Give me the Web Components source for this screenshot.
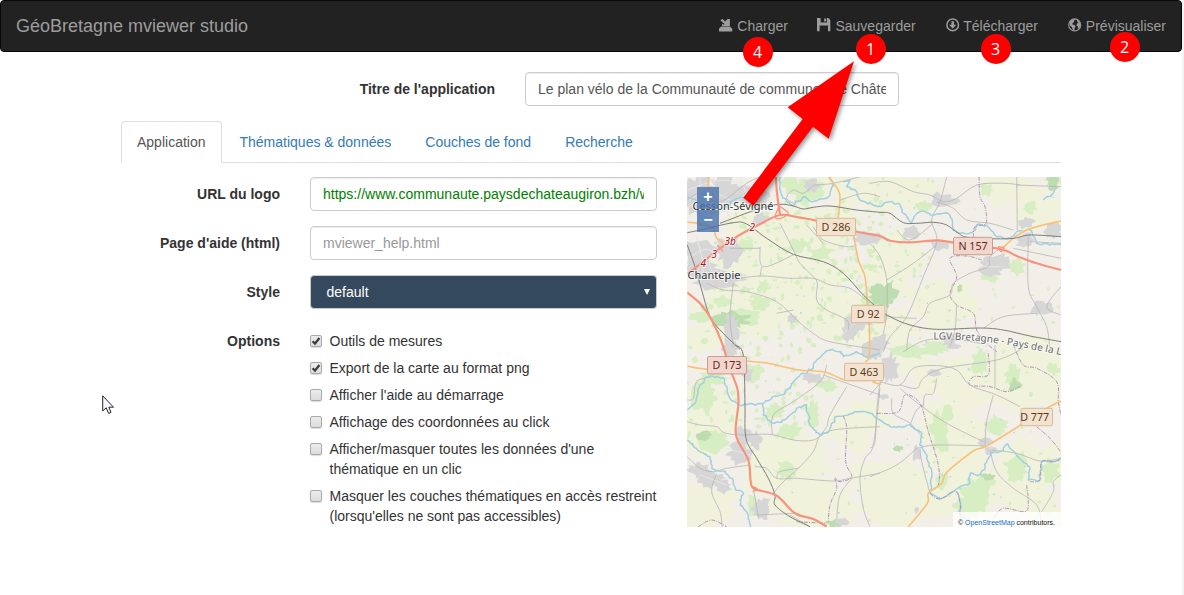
<!DOCTYPE html>
<html lang="fr">
<head>
<meta charset="utf-8">
<title>GéoBretagne mviewer studio</title>
<style>
html{background:#f4f4f4}
body{margin:0;width:1182px;height:595px;background:#fff;overflow:hidden;font:14px/20px "Liberation Sans",Arial,sans-serif;color:#333}
</style>
</head>
<body>
<studio-app></studio-app>
<script>
const define = (name, html, after) => {
  const t = document.createElement('template');
  t.innerHTML = html;
  customElements.define(name, class extends HTMLElement {
    connectedCallback() {
      if (this.shadowRoot) return;
      this.attachShadow({mode: 'open'}).append(t.content.cloneNode(true));
      if (after) after(this, this.shadowRoot);
    }
  });
};

const ICONS = {
  open: '<path d="M0 13.6V10.4L2.4 8.6H10.8L13.2 10.4V13.6Z"/><path d="M1.4 2.6L3.4 .8L6 3.4L8.6 .9H10.9V8H3.4L5.6 5.9Z"/><path d="M3 5.5V8H4.600L4.800 6.700Z"/>',
  save: '<path fill-rule="evenodd" d="M0 0H3.6V4.6H10V0H11.3L13.3 2V13.3H11V7.6H2.6V13.3H0ZM7.2 .4H9.2V3.6H7.2Z"/>',
  download: '<circle cx="6.7" cy="6.9" r="5.8" fill="none" stroke="currentColor" stroke-width="1.5"/><path d="M5.4 3.2H8V6.7H10.3L6.7 10.8L3.1 6.7H5.4Z"/>',
  globe: '<circle cx="6.7" cy="6.9" r="6" fill="none" stroke="currentColor" stroke-width="1.1"/><path d="M1.2 4.5L3.2 1.8L6.3 1L7.2 2L5.8 2.8L6.2 4L4.6 5L4.4 6.4L6.6 7L7.6 8.6L6.6 10.2L6.3 12.6L4.6 11.6L4 9.2L2 7.6ZM8.6 1.4L11.6 3.6L12.6 7L11.4 10L10 10.8L9.8 8.4L8.4 7.2L9 5.4L10.6 4.8L9.2 3.6Z"/>'
};
define('nav-action', `<style>
:host{display:block;padding:15px;color:#9d9d9d;white-space:nowrap}
svg{width:14px;height:14px;display:inline-block;vertical-align:-1px;fill:currentColor;overflow:visible}
:host([icon=save]) svg{margin:0 .3px 0 -.7px}
</style><svg viewBox="0 0 14 14"></svg> <slot></slot>`, (el, r) => {
  r.querySelector('svg').innerHTML = ICONS[el.getAttribute('icon')];
});

define('top-bar', `<style>
:host{display:flex;justify-content:space-between;box-sizing:border-box;height:52px;border:1px solid #080808;border-radius:4px;background:#222;margin-bottom:20px}
.brand{padding:15px;font-size:18px;color:#9d9d9d}
nav{display:flex}
</style><div class="brand"><slot name="brand"></slot></div><nav><slot></slot></nav>`);

define('form-row', `<style>
:host{display:grid;grid-template-columns:var(--cols,189px 377px);margin-bottom:15px}
.l{padding:7px 15px 0;text-align:right;font-weight:700}
.f{padding:0 15px;min-width:0}
</style><div class="l"><slot name="label"></slot></div><div class="f"><slot></slot></div>`);

define('text-field', `<style>
:host{display:block;box-sizing:border-box;height:34px;border:1px solid #ccc;border-radius:4px;padding:6px 12px;color:#555;box-shadow:inset 0 1px 1px rgba(0,0,0,.075);background:#fff}
div{overflow:hidden;white-space:nowrap}
</style><div><slot></slot></div>`);

define('select-field', `<style>
:host{display:flex;justify-content:space-between;align-items:center;box-sizing:border-box;height:34px;border:1px solid #ccc;border-radius:4px;padding:0 6px 0 15.500px;background:#34495e;color:#fff}
i{border:3.5px solid transparent;border-top:6px solid #fff;border-bottom:0}
</style><slot></slot><i></i>`);

define('check-option', `<style>
:host{display:flex;padding-top:7px}
i{box-sizing:border-box;flex:none;width:12px;height:12px;margin:4px 7.5px 0 0;border:1px solid #a9a9a9;border-radius:2px;background:linear-gradient(#ececec,#dcdcdc);box-shadow:0 1px 1px #ddd}
svg{display:none;width:10px;height:10px}
:host([checked]) svg{display:block}
</style><i><svg viewBox="0 0 10 10"><path d="M1.6 5.2L4 7.6L8.4 2" fill="none" stroke="#3a3a3a" stroke-width="2.2"/></svg></i><div><slot></slot></div>`);

define('tab-item', `<style>
:host{display:block;padding:10px 15px;border:1px solid transparent;border-radius:4px 4px 0 0;margin:0 2px -1px 0;color:#337ab7}
:host([active]){color:#555;background:#fff;border-color:#ddd;border-bottom-color:#fff}
</style><slot></slot>`);
define('tab-strip', `<style>:host{display:flex;margin:0 15px 14px;border-bottom:1px solid #ddd}</style><slot></slot>`);

/* Map geometry: point lists on four sheets, three units to a pixel. */
const SHEETS = {A: [-7, -7], B: [183, -7], C: [-7, 168], D: [183, 168]};
const pts = s => {
  let o = SHEETS.A; const out = [];
  for (const k of s.trim().split(/\s+/)) {
    if (SHEETS[k]) { o = SHEETS[k]; continue; }
    const [x, y] = k.split(',').map(Number);
    out.push([o[0] + x / 3, o[1] + y / 3]);
  }
  return out;
};
const n = v => v.toFixed(1);
let seed = 7;
const rnd = () => (seed = (seed * 16807) % 2147483647) / 2147483647;
const line = s => {
  const p = pts(s); let d = 'M' + n(p[0][0]) + ' ' + n(p[0][1]);
  for (let i = 0; i < p.length - 1; i++) {
    const a = p[i - 1] || p[i], b = p[i], c = p[i + 1], e = p[i + 2] || c;
    d += `C${n(b[0] + (c[0] - a[0]) / 6)} ${n(b[1] + (c[1] - a[1]) / 6)} ${n(c[0] - (e[0] - b[0]) / 6)} ${n(c[1] - (e[1] - b[1]) / 6)} ${n(c[0])} ${n(c[1])}`;
  }
  return d;
};
const wavy = s => {
  const p = pts(s); let d = 'M' + n(p[0][0]) + ' ' + n(p[0][1]);
  for (let i = 1; i < p.length; i++) {
    const a = p[i - 1], b = p[i], L = Math.hypot(b[0] - a[0], b[1] - a[1]), m = Math.max(1, Math.round(L / 4));
    for (let j = 1; j <= m; j++) {
      const t = j / m, w = (rnd() - .5) * (j < m ? 3 : 0), u = (j - .5) / m, v = (rnd() - .5) * 3;
      d += `Q${n(a[0] + (b[0] - a[0]) * u + v)} ${n(a[1] + (b[1] - a[1]) * u - v)} ${n(a[0] + (b[0] - a[0]) * t + w)} ${n(a[1] + (b[1] - a[1]) * t + w)}`;
    }
  }
  return d;
};
/* Irregular parcel outline; larger parcels get more corners. */
const blob = (x, y, rx, ry) => {
  const k = Math.round(6 + Math.min(16, (rx + ry) * .7) + rnd() * 3), out = [];
  for (let i = 0; i < k; i++) {
    const a = i / k * 6.283, r = .6 + rnd() * .62;
    out.push(n(x + Math.cos(a) * rx * r) + ' ' + n(y + Math.sin(a) * ry * r));
  }
  return 'M' + out.join('L') + 'Z';
};
const blobs = s => { let o = SHEETS.A, d = '';
  for (const k of s.trim().split(/\s+/)) {
    if (SHEETS[k]) { o = SHEETS[k]; continue; }
    const [x, y, a, b] = k.split(',').map(Number);
    d += blob(o[0] + x / 3, o[1] + y / 3, a / 3, b / 3);
  } return d; };
const fill = (c, d) => `<path fill="${c}" d="${d}"/>`;
const stroke = (c, w, list, f = line, extra = '') => `<path fill="none" stroke="${c}" stroke-width="${w}" stroke-linejoin="round" ${extra} d="${list.map(f).join('')}"/>`;

const scatter = (count, x0, y0, x1, y1, r) => { let d = '';
  for (let i = 0; i < count; i++) d += blob(x0 + rnd() * (x1 - x0), y0 + rnd() * (y1 - y0), r * (.4 + rnd()), r * (.4 + rnd()));
  return d; };

const drawMap = () => [
  fill('#f2efe9', 'M0 0H374V350H0Z'),
  fill('#f0f2dc', blobs('A 300,300,240,200 560,60,150,60 500,450,130,90 380,180,150,80 90,500,90,50 200,420,160,90 B 90,60,120,60 60,280,90,120 200,400,120,80 420,60,130,50 500,130,80,50 C 90,230,110,100 70,480,100,90 330,350,150,110 410,480,150,70 520,240,110,80 D 250,100,130,90 110,60,80,30 470,80,140,110 260,260,130,110 90,440,170,110 320,420,130,90 490,370,130,90 500,480,90,60 B 60,480,90,60')),
  fill('#f2efe9', blobs('A 340,500,80,30 C 300,120,70,50 150,320,50,70 D 360,200,70,30 60,300,70,50 B 450,330,110,100 300,60,60,40')),
  fill('#d7edc2', scatter(210, 15, 20, 190, 170, 2.6) + scatter(80, 130, 0, 250, 140, 2.3) + scatter(80, 0, 170, 130, 260, 2.7) + scatter(35, 200, 110, 374, 175, 2) + scatter(40, 120, 180, 374, 345, 1.8)),
  fill('#d7edc2', blobs('A 60,440,38,20 200,440,50,26 130,395,30,18 250,350,20,22 380,65,55,38 420,250,35,20 350,230,25,22 580,400,35,30 240,400,40,25 330,40,30,22 200,225,22,20 B 480,110,22,20 550,30,25,25 360,320,28,18 440,290,28,28 160,110,30,20 350,60,20,20 20,440,40,20 C 90,290,50,35 70,150,35,60 100,100,45,20 330,260,42,26 320,375,32,30 400,210,20,45 440,120,34,20 285,200,30,24 220,80,30,26 215,480,14,40 D 330,50,28,38 430,90,26,34 120,20,65,22 200,10,45,20 235,205,18,24 210,260,30,70 380,240,34,30 440,370,34,50 320,450,44,56 290,490,40,36 540,375,30,36 350,410,30,18 215,410,18,32 550,70,18,20')),
  fill('#bddcb0', blobs('A 150,450,60,28 590,370,22,26 B 45,375,40,38 548,38,20,26 270,355,9,12 C 72,270,22,16 465,535,28,12 D 435,120,20,22 85,310,17,9 355,395,20,10')),
  fill('#b9e6cc', scatter(26, 10, 10, 365, 335, 1.3)), fill('#ffe0c0', scatter(44, 40, 20, 270, 180, 1.1)), fill('#a9d8e8', scatter(44, 5, 5, 370, 345, .9)),
  fill('#d7d6d6', blobs('A 60,80,60,70 130,65,50,50 210,80,65,30 60,240,55,28 110,330,80,35 55,285,50,40 145,240,40,50 240,150,28,22 395,45,22,22 560,205,45,20 510,480,26,40 540,450,40,28 335,445,15,16 155,480,22,55 B 215,90,28,24 245,95,28,12 125,185,30,22 20,205,20,15 210,225,28,18 365,290,40,34 390,275,34,28 465,210,30,22 470,160,26,18 550,180,28,24 515,415,38,24 30,520,30,28 240,510,26,25 C 150,12,28,30 200,85,18,28 190,270,24,28 180,325,38,34 225,285,22,28 90,405,50,26 60,378,35,24 130,425,25,20 245,490,32,34 400,100,36,16 580,15,30,28 490,530,22,14 D 60,70,28,46 10,15,32,28 40,155,18,10 190,85,24,12 345,290,25,15 362,315,22,15 140,325,14,24 255,5,16,10 140,495,8,12')),
  stroke('#e9e7e8', 1, ['A 30,90 80,60 150,90', 'A 40,140 90,110 140,120 210,60', 'A 100,20 110,80 150,140', 'A 180,20 210,90 260,130', 'A 30,260 90,240 130,320', 'A 50,200 70,290 60,340', 'A 110,220 90,290 140,340', 'C 140,310 210,330', 'C 60,390 140,420', 'B 340,290 400,290', 'A 480,500 545,440', 'A 22,110 70,100 90,150', 'A 22,60 130,30 240,60', 'A 60,20 55,150']),
  stroke('#b7b4b7', .8, [
    'A 22,90 60,70 120,95 200,40 240,20', 'A 80,340 130,360 200,365 290,395 350,450 400,490 450,515 600,540', 'A 160,340 150,440 160,530', 'A 150,330 240,318 330,325 400,325 450,345 510,355 570,400', 'A 300,160 340,240 360,280 400,320 412,340 410,390 440,420 500,450 505,480', 'A 240,230 250,290 340,255', 'A 150,235 240,235', 'A 400,170 430,210 500,230 530,225', 'A 380,165 430,220', 'A 400,45 370,70 340,60 320,85 350,105', 'A 400,45 460,40 540,20', 'A 245,290 240,320', 'A 340,420 290,430', 'A 480,90 550,70 600,80',
    'B 0,40 60,35 130,65 180,75 220,95 260,85 320,45 400,40 450,45', 'B 230,20 210,95 185,150 200,215 160,320 110,440 60,500 40,545', 'B 200,95 250,115 290,150 360,160 430,180', 'B 440,20 442,180', 'B 440,45 573,50', 'B 0,220 30,260 50,330 50,430 40,490', 'B 50,330 130,280 200,225', 'B 400,230 360,260 355,290 300,310 250,340 240,375 180,400 160,440 120,480 110,540', 'B 475,200 475,350 500,410 530,470 540,540', 'B 480,215 573,220', 'B 0,420 60,440 140,445', 'B 573,350 530,410 573,435', 'B 340,475 400,440 500,430', 'B 260,405 255,480 240,530', 'B 100,545 170,510 270,510 330,520', 'B 430,235 573,265', 'B 80,180 120,210 190,160',
    'C 22,230 60,240 110,245 130,262 180,270 270,268 340,285 400,285 460,255 600,245', 'C 95,95 50,110 40,160 22,165', 'C 277,268 280,210 340,170 420,110 440,60', 'C 430,90 600,150', 'C 500,125 450,210 440,245 415,280 400,320 355,370 310,410 280,445', 'C 225,365 260,370 290,400 350,400 460,408 510,400 600,385', 'C 210,360 140,370 100,380 60,370 22,335', 'C 110,385 95,440 120,500 127,545', 'C 290,400 300,380 355,370', 'C 220,430 235,515', 'C 230,510 340,505', 'C 600,130 580,300 555,340 540,400 550,490 570,545', 'C 515,400 480,450 470,520', 'C 330,510 390,545',
    'D 30,110 90,120 130,70 200,62 260,75 300,120 380,150 450,185', 'D 90,120 140,130 160,100 220,70 380,45 460,10', 'D 90,130 150,180 230,235 340,290', 'D 370,150 350,230 345,300', 'D 140,310 200,300 350,303', 'D 0,395 80,360 140,310', 'D 160,180 140,195 120,240', 'D 30,110 20,200 15,290 0,310', 'D 65,160 70,205 120,235 160,280', 'D 150,310 155,350 180,445', 'D 365,315 440,325 510,348 573,340', 'D 360,315 380,380 430,430 500,480 515,545', 'D 573,390 550,410 550,440 515,500', 'D 375,0 375,130', 'D 160,185 165,150 190,145 200,100', 'D 35,110 0,150']),
  stroke('#9fcfe0', 1.45, ['A 300,20 300,60 310,85 340,108 370,80 395,95 440,85 460,45 450,20', 'A 490,35 510,30 500,50 530,65 540,90 580,105 600,108 B 35,108 60,95 90,105 100,130 125,160 140,130 165,125 190,135 230,128 245,145 250,180 270,190 305,188 320,165 350,165 380,200 420,205 440,185 480,180 500,220 573,225', 'A 22,80 70,100 50,160 100,175', 'A 80,100 130,120 160,90 220,80', 'B 520,90 530,80 550,70 555,58', 'C 22,195 45,175 60,120 90,92 130,100 150,160 185,182 250,175 300,150 330,128 350,100 365,85 400,70 410,45 450,15 480,20 490,35 530,20 560,35 600,25', 'C 250,175 250,210 280,235 320,220 350,190 380,180 390,240 420,270 445,262 465,215 490,213 540,200 570,205 600,225 D 60,245 100,245 120,240 155,265 150,300 170,330 185,380 180,440 210,462 250,440 270,425 300,415 300,385 330,390 350,350 365,325 390,320 410,297 440,330 480,370 475,405 510,405 515,350 555,350 573,338', 'C 22,285 60,320 90,335 95,370 130,378 155,400 165,430 190,445 180,480 200,500 212,545', 'D 260,440 270,470 270,512 300,525'], wavy),
  stroke('#ab8fb3', .95, ['B 327,20 330,80 345,110 348,160 315,170 310,200', 'B 335,270 290,258 240,265 260,320 240,370 260,405 310,430 320,480 350,520 380,545', 'C 490,213 500,250 497,350 515,395 480,410 465,400 470,430 450,480 445,530', 'D 20,205 85,200 105,150 150,175 175,260 205,360 205,420 180,442 210,462 255,438 270,470 270,512', 'D 355,25 355,90 310,95 300,120 360,125 410,140 450,125', 'D 430,0 460,60 500,70 560,110 565,170 573,210', 'D 500,245 540,280 573,322', 'D 470,420 475,470 465,500 400,490 370,520', 'C 55,545 95,525 140,545', 'C 350,530 440,535', 'D 480,410 510,405 515,350 555,350 573,338'], line, 'stroke-dasharray="4 1.2 1 1.2"'),
  stroke('#f9c079', 1.6, ['A 22,156 75,163 100,175 110,205 140,225', 'A 85,20 85,60', 'A 445,20 475,60 480,90 474,150', 'A 520,190 535,270 555,320 562,400 568,470 567,560 C 555,50', 'C 22,64 100,72 165,40 200,48 260,54 350,74 430,80 470,95 500,106 580,106 D 10,112 34,118', 'B 400,232 430,205 470,180 520,165 573,153', 'D 573,168 530,190 452,240 350,303 310,318 230,382 215,415 175,445 172,475 115,545']),
  stroke('#777', .95, ['A 22,188 60,180 160,158 200,162 260,205 340,253 430,275 490,310 550,375 600,420 B 60,440 120,465 200,478 330,474 400,480 480,498 573,515', 'A 22,225 45,290 65,360 90,440 130,490 180,538', 'C 165,0 190,30 195,180 198,280 230,340 265,400 285,450 285,480 330,515 390,545', 'A 120,160 240,115 300,103 340,108 370,117 400,112 450,108 530,120 600,127 B 60,130 100,158 140,160 190,157 230,165 265,190 300,203 420,206 480,195 573,200']),
  stroke('#f7937c', 2.2, ['A 22,312 70,275 120,235 170,200 235,165 300,135 360,143 410,152 530,185 600,198 B 60,212 120,217 200,211 250,218 390,237 440,258 500,280 573,300', 'A 288,20 290,60 295,100 300,135', 'A 22,368 60,400 95,450 130,530 C 145,60 172,130 175,180 168,270 205,345 212,410 225,432 290,452 345,505 400,522 440,545']),
  stroke('#f7937c', 1.2, ['A 298,108 325,130 300,146 285,140 298,108', 'A 112,225 130,245', 'B 385,230 402,234 392,245 385,230', 'C 216,424 232,432 218,440']),
].join('');

const shield = (x, y, w, t, red, cut) => `<g><rect x="${x}" y="${y}" width="${w}" height="17.4" rx="1.5" fill="${red ? '#f2d5cd' : '#f3e2cf'}" stroke="${red ? '#c08d80' : '#d2ae86'}" stroke-width=".8"/><text x="${x + w / 2 - (cut || 0)}" y="${y + 12.6}" text-anchor="middle" font-size="10.7" fill="${red ? '#66281c' : '#5b3a17'}">${t}</text></g>`;

define('map-view', `<style>
:host{display:block;position:relative;width:374px;height:350px;overflow:hidden;font-family:"Noto Sans",sans-serif}
svg{display:block}
.zoom{position:absolute;left:10px;top:10px;width:22px}
.zoom b{display:block;height:22px;margin-bottom:1px;background:rgba(72,113,171,.8);color:#fff;font:700 16px/20px "Liberation Sans",Arial,sans-serif;text-align:center}
.attr{position:absolute;right:0;bottom:0;width:108px;height:15px;box-sizing:border-box;padding:4px 6px 0 0;text-align:right;background:rgba(255,255,255,.8);color:#111;font:7px/14px "Liberation Sans",Arial,sans-serif;white-space:nowrap}
.attr span{color:#1470c0}
.halo{paint-order:stroke;stroke:#fff;stroke-opacity:.65;stroke-width:2px}
</style><svg width="374" height="350" viewBox="0 0 374 350"></svg>
<div class="zoom"><b>+</b><b>−</b></div><div class="attr">© <span>OpenStreetMap</span> contributors.</div>`, (el, r) => {
  r.querySelector('svg').innerHTML = drawMap() +
    `<g class="halo" fill="#333" font-size="11"><text x="5.5" y="33.2" textLength="81">Cesson-Sévigné</text><text x="0.5" y="102" textLength="53">Chantepie</text></g>
    <g class="halo" fill="#a01a2a" font-size="10" font-style="italic"><text x="62.500" y="53.8">2</text><text x="37.500" y="68.2">3b</text><text x="24.500" y="81.2">3</text><text x="13.500" y="90.2">4</text></g>
    <path id="lgv" fill="none" d="M246.500 162.500Q282 162 315 167T395 183"/>
    <text class="halo" fill="#666" font-size="10" letter-spacing=".05"><textPath href="#lgv">LGV Bretagne - Pays de la Loire</textPath></text>` +
    shield(129.500, 41.300, 39, 'D 286') + shield(266.500, 60.300, 39, 'N 157', 1) + shield(164.500, 128.300, 33.500, 'D 92') +
    shield(20.500, 179.500, 39, 'D 173', 1) + shield(157.500, 186.300, 39, 'D 463') + shield(334, 231.300, 31.500, 'D 777', 0, 2);
});

define('step-badge', `<style>
:host{position:absolute;display:block;width:30px;height:30px;border-radius:50%;background:#f00;color:#fff;text-align:center;font:16px/30px "Open Sans",sans-serif;transform:translate(-50%,-50%)}
</style><slot></slot>`);
define('pointer-arrow', `<style>
:host{position:absolute;display:block;left:730px;top:50px;width:170px;height:170px}
svg{display:block;overflow:visible;filter:drop-shadow(2px 2px 2px rgba(0,0,0,.4))}
</style><svg width="170" height="170" viewBox="0 0 510 510"><path fill="#f00" d="M372 34L173 172L218 207L40 443L70 467L249 230L296 266Z"/></svg>`);
define('mouse-cursor', `<style>:host{position:absolute;display:block;left:102px;top:395px}svg{display:block}</style>
<svg width="13" height="20" viewBox="0 0 13 20"><path d="M.7 .8V16L4.200 12.800L6.600 18.400L9 17.400L6.800 12.200H11.500Z" fill="#f8f8f8" stroke="#223" stroke-width="1"/></svg>`);

define('studio-app', `<style>
:host{display:block;position:relative}
main{width:970px;margin:0 auto}
.title{--cols:404px 404px}
.panel{display:grid;grid-template-columns:566px 404px}
map-view{margin:0 15px}
.url{color:#008000}.ph{color:#999}
</style>
<top-bar><span slot="brand">GéoBretagne mviewer studio</span>
<nav-action icon="open">Charger</nav-action><nav-action icon="save">Sauvegarder</nav-action><nav-action icon="download">Télécharger</nav-action><nav-action icon="globe">Prévisualiser</nav-action></top-bar>
<main>
<form-row class="title"><span slot="label">Titre de l'application</span><text-field>Le plan vélo de la Communauté de communes de Châteaugiron</text-field></form-row>
<tab-strip><tab-item active>Application</tab-item><tab-item>Thématiques &amp; données</tab-item><tab-item>Couches de fond</tab-item><tab-item>Recherche</tab-item></tab-strip>
<div class="panel"><div>
<form-row><span slot="label">URL du logo</span><text-field class="url">https://www.communaute.paysdechateaugiron.bzh/wp</text-field></form-row>
<form-row><span slot="label">Page d'aide (html)</span><text-field class="ph">mviewer_help.html</text-field></form-row>
<form-row><span slot="label">Style</span><select-field>default</select-field></form-row>
<form-row><span slot="label">Options</span>
<check-option checked>Outils de mesures</check-option><check-option checked>Export de la carte au format png</check-option><check-option>Afficher l'aide au démarrage</check-option><check-option>Affichage des coordonnées au click</check-option><check-option>Afficher/masquer toutes les données d'une thématique en un clic</check-option><check-option>Masquer les couches thématiques en accès restreint (lorsqu'elles ne sont pas accessibles)</check-option></form-row>
</div><map-view></map-view></div>
</main>
<pointer-arrow></pointer-arrow>
<step-badge style="left:757.500px;top:52.300px">4</step-badge><step-badge style="left:870.500px;top:49.300px">1</step-badge><step-badge style="left:995.500px;top:49.300px">3</step-badge><step-badge style="left:1124.500px;top:47.300px">2</step-badge>
<mouse-cursor></mouse-cursor>`);
</script>
</body>
</html>
